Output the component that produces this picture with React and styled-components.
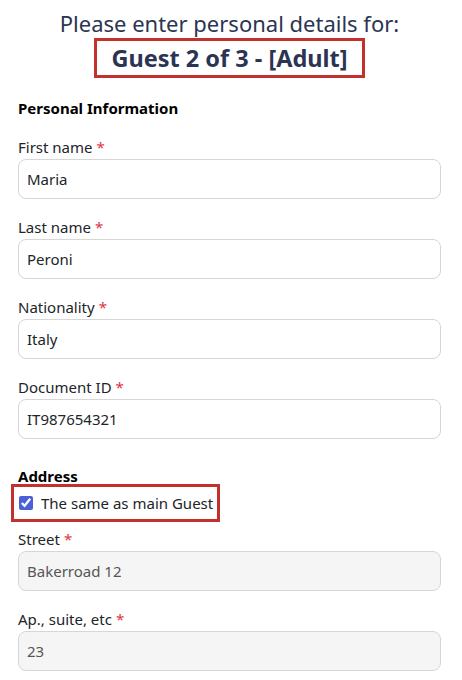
import React from "react";
import styled, { createGlobalStyle } from "styled-components";

const Global = createGlobalStyle`
  html, body { margin: 0; padding: 0; background: #fff; }
  body { font-family: "Noto Sans", "Open Sans", sans-serif; color: #212529; }
  * { box-sizing: border-box; }
`;

const Page = styled.div`
  padding: 8px 21px 0 18px;
`;

const Header = styled.header`
  display: flex;
  flex-direction: column;
  align-items: center;
  color: #2b3553;
`;

const Lead = styled.div`
  font-size: 22px;
  line-height: 30px;
`;

const Highlight = styled.div`
  border: 3.5px solid #c4302b;
  padding: 0 14px;
  font-size: 23.5px;
  font-weight: 700;
  line-height: 34px;
`;

const SectionTitle = styled.div`
  font-size: 15px;
  font-weight: 700;
  color: #000;
  line-height: 20px;
  margin-top: ${(p) => p.$top}px;
`;

const Field = styled.div`
  display: flex;
  flex-direction: column;
  margin-top: ${(p) => p.$top}px;
`;

const Label = styled.label`
  font-size: 15px;
  line-height: 22px;
  margin-bottom: 1px;
  color: #212529;
`;

const Req = styled.span`
  color: #dc3545;
  margin-left: 4px;
`;

const Input = styled.input`
  height: 40px;
  width: 100%;
  border: 1px solid #d6d6d6;
  border-radius: 8px;
  padding: 0 8px;
  font-family: inherit;
  font-size: 15px;
  color: ${(p) => (p.disabled ? "#555" : "#212529")};
  background: ${(p) => (p.disabled ? "#f5f5f6" : "#fff")};
  outline: none;
`;

const CheckBox = styled.label`
  display: inline-flex;
  align-items: center;
  gap: 8px;
  align-self: flex-start;
  margin-left: -7px;
  margin-top: -2px;
  padding: 5px 4px 5px 5px;
  border: 3.5px solid #c4302b;
  font-size: 15px;
  line-height: 22px;
  input {
    margin: 0;
    width: 14px;
    height: 14px;
    accent-color: #4a5fd8;
  }
`;

const Group = styled.div`
  display: flex;
  flex-direction: column;
`;

const fields1 = [
  ["First name", "Maria"],
  ["Last name", "Peroni"],
  ["Nationality", "Italy"],
  ["Document ID", "IT987654321"],
];

export default function App() {
  return (
    <>
      <Global />
      <Page>
        <Header>
          <Lead>Please enter personal details for:</Lead>
          <Highlight>Guest 2 of 3 - [Adult]</Highlight>
        </Header>
        <SectionTitle $top={20}>Personal Information</SectionTitle>
        {fields1.map(([l, v], i) => (
          <Field key={l} $top={i === 0 ? 18 : 17}>
            <Label>
              {l}
              <Req>*</Req>
            </Label>
            <Input defaultValue={v} />
          </Field>
        ))}
        <Group>
          <SectionTitle $top={27}>Address</SectionTitle>
          <CheckBox>
            <input type="checkbox" defaultChecked />
            The same as main Guest
          </CheckBox>
        </Group>
        <Field $top={6}>
          <Label>
            Street<Req>*</Req>
          </Label>
          <Input disabled defaultValue="Bakerroad 12" />
        </Field>
        <Field $top={17}>
          <Label>
            Ap., suite, etc<Req>*</Req>
          </Label>
          <Input disabled defaultValue="23" />
        </Field>
      </Page>
    </>
  );
}
